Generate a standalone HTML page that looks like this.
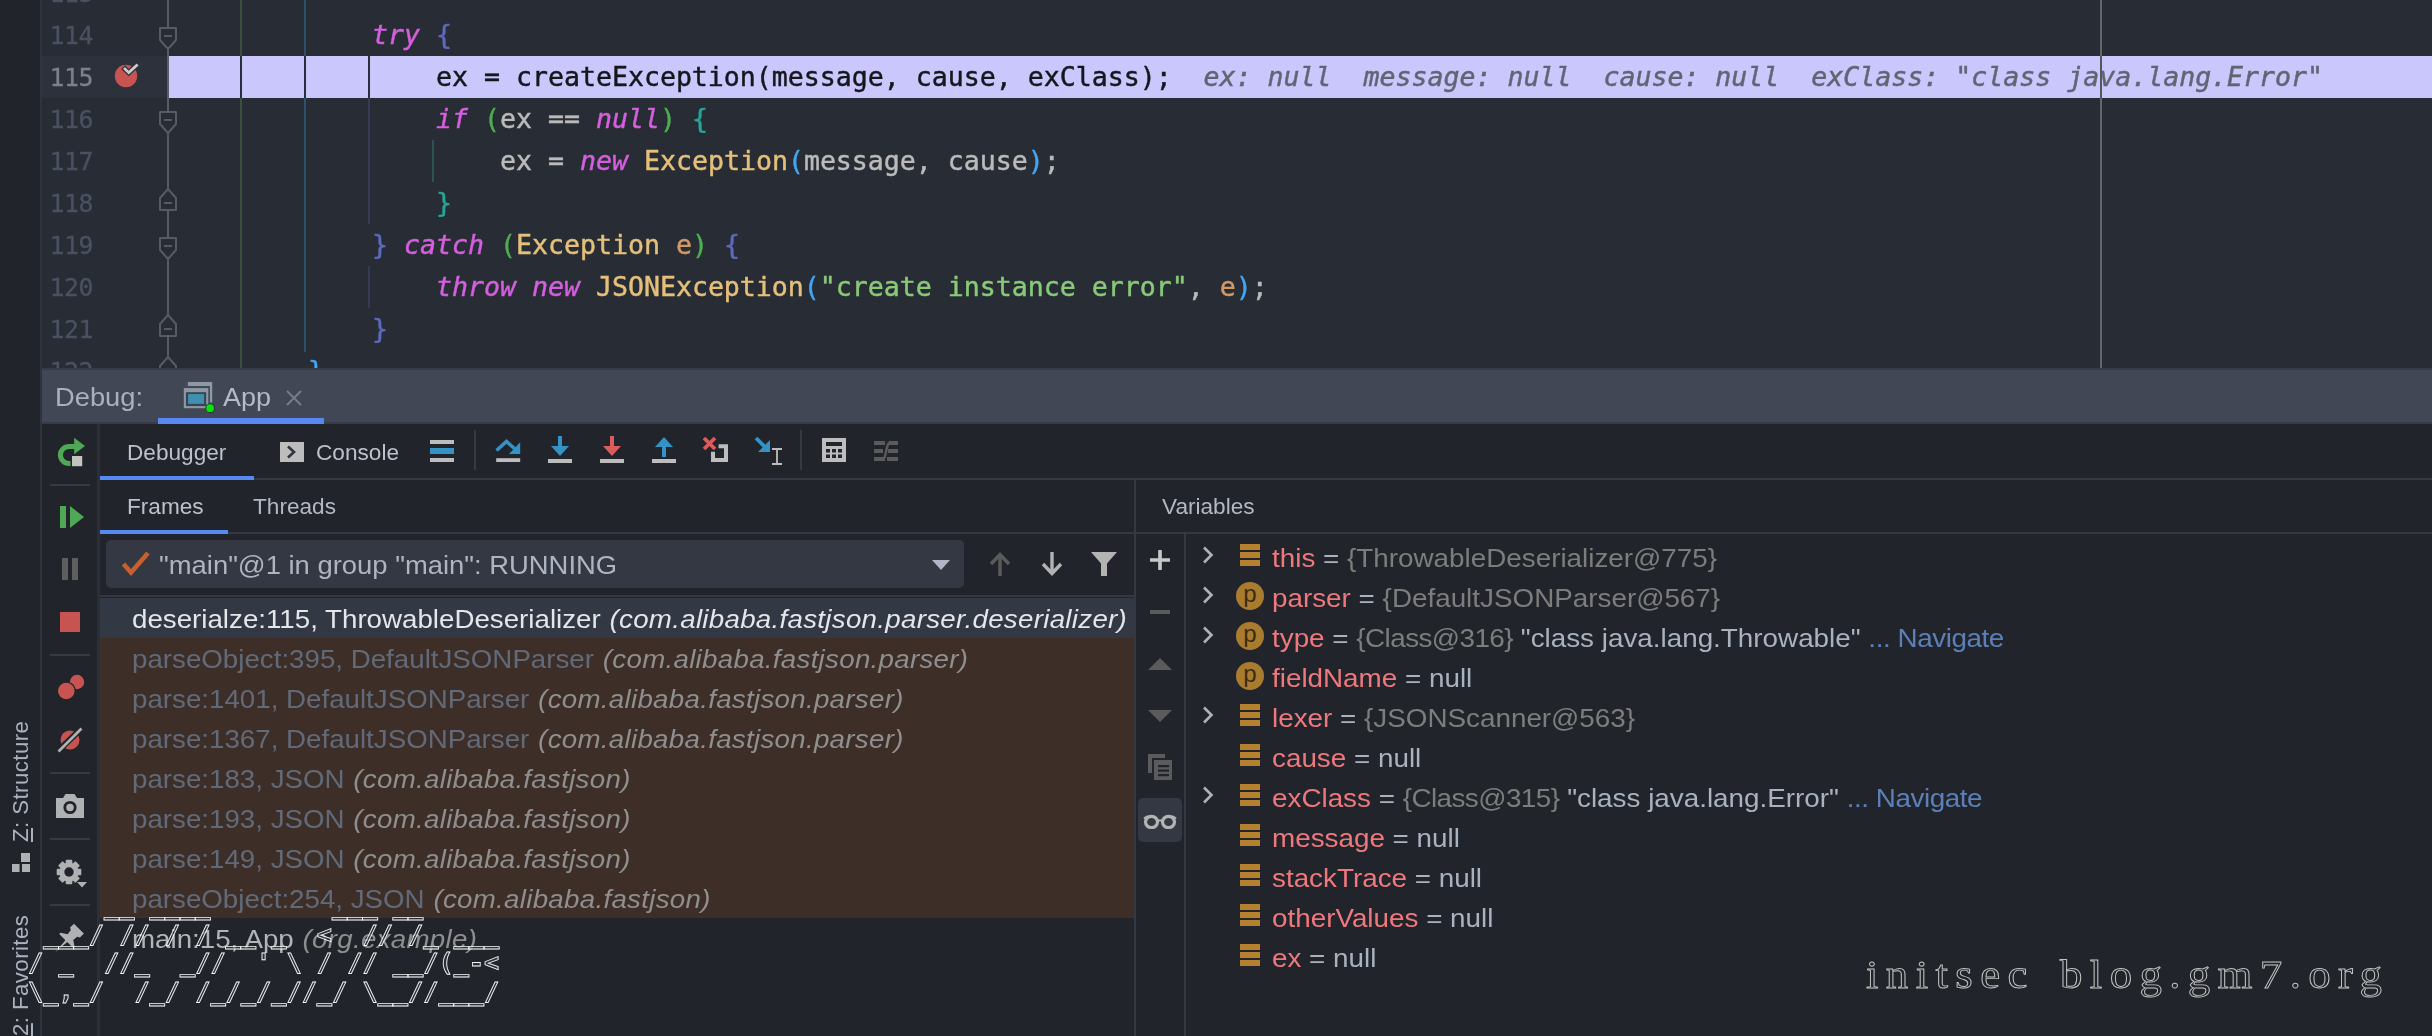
<!DOCTYPE html>
<html lang="en">
<head>
<meta charset="utf-8">
<title>Debug - ThrowableDeserializer</title>
<style>
*{box-sizing:border-box;margin:0;padding:0}
html,body{width:2432px;height:1036px;overflow:hidden;background:#21252b}
body{position:relative;font-family:"Liberation Sans",sans-serif;color:#abb2bf}
.abs{position:absolute}
/* left strip */
#strip{left:0;top:0;width:40px;height:1036px;background:#21252b}
#stripb{left:40px;top:0;width:2px;height:1036px;background:#2f343d}
.vtxt{position:absolute;left:6px;white-space:nowrap;font-size:22.2px;line-height:30px;height:30px;letter-spacing:0.45px;color:#abb2bf;transform-origin:0 0;transform:rotate(-90deg)}
/* editor */
#editor{left:42px;top:0;width:2390px;height:368px;background:#282c34;overflow:hidden}
.ln{position:absolute;left:0;width:51px;text-align:right;font-family:"DejaVu Sans Mono","Liberation Mono",monospace;font-size:24.8px;line-height:42px;height:42px;margin-top:0.5px;color:#495162;letter-spacing:-0.43px;-webkit-text-stroke:0.3px currentColor}
.code{position:absolute;left:0;white-space:pre;font-family:"DejaVu Sans Mono","Liberation Mono",monospace;font-size:26.576px;line-height:42px;height:42px;color:#bbbbbb;-webkit-text-stroke:0.45px currentColor}
.k{color:#d55fde;font-style:italic}
.c{color:#e5c07b}
.s{color:#89ca78}
.p{color:#d19a66}
.b1{color:#5c6bc0}.b2{color:#4caf50}.b3{color:#26a69a}.b4{color:#42a5f5}
.guide{position:absolute;width:2px}
/* debug header */
#dsep{left:42px;top:368px;width:2390px;height:56px;background:#363c48}
#dhead{left:42px;top:370px;width:2390px;height:52px;background:#414755}
/* debug body */
#dbody{left:42px;top:424px;width:2390px;height:612px;background:#21252b}
.ui{position:absolute;white-space:nowrap;font-size:24px;line-height:30px;color:#abb2bf;transform-origin:0 0}
.row{position:absolute;left:132px;white-space:nowrap;font-size:25.2px;line-height:40px;height:40px;color:#626a79;transform-origin:0 0;transform:scaleX(1.1)}
.row i{color:#8f8f8f;letter-spacing:0.26px;margin-left:1px}
.var{position:absolute;left:1272px;white-space:nowrap;font-size:25.2px;line-height:40px;height:40px;color:#abb2bf;transform-origin:0 0;transform:scaleX(1.1045)}
.var .n{color:#f0787d}
.var .g{color:#7d7d7d}
.var .nav{color:#5b80b9;letter-spacing:-0.4px}
.hline{position:absolute;height:2px;background:#333842}
.vline{position:absolute;width:2px;background:#333842}
#art{left:28px;top:891.5px;font-family:"DejaVu Sans Mono","Liberation Mono",monospace;font-weight:bold;font-size:25.25px;line-height:28.7px;color:rgba(52,56,68,0.6);-webkit-text-stroke:0.85px #f6f6f6;white-space:pre;letter-spacing:0}
#wm{left:1866px;top:950px;font-family:"Liberation Serif",serif;font-size:40px;line-height:50px;letter-spacing:6.6px;word-spacing:6px;color:transparent;-webkit-text-stroke:0.9px #c2c2c2;white-space:nowrap;transform-origin:0 0;transform:scaleX(1.12)}
.vtxt u{text-decoration-thickness:1.5px;text-underline-offset:3px}
.ui,.row,.var,.code,.ln,.vtxt,#art,#wm{will-change:transform}
</style>
</head>
<body>
<div id="strip" class="abs"></div>
<div id="stripb" class="abs"></div>
<div id="editor" class="abs">
<div class="abs" style="left:0;top:56px;width:126px;height:42px;background:#2c313c"></div>
<div class="abs" style="left:126px;top:56px;width:2264px;height:42px;background:#c9c7fc"></div>
<div class="guide" style="left:198px;top:0px;height:368px;background:#39503f"></div>
<div class="guide" style="left:262px;top:0px;height:352px;background:#2f506a"></div>
<div class="guide" style="left:326px;top:98px;height:126px;background:#353a55"></div>
<div class="guide" style="left:326px;top:266px;height:42px;background:#353a55"></div>
<div class="guide" style="left:390px;top:140px;height:42px;background:#2c5350"></div>
<div class="guide" style="left:198px;top:56px;height:42px;background:#2b2f3a"></div>
<div class="guide" style="left:262px;top:56px;height:42px;background:#2b2f3a"></div>
<div class="guide" style="left:326px;top:56px;height:42px;background:#2b2f3a"></div>
<div class="guide" style="left:2058px;top:0px;height:368px;background:#62666d"></div>
<div class="guide" style="left:2058px;top:56px;height:42px;background:#55555f"></div>
<div class="guide" style="left:125px;top:0;height:368px;background:#565b66"></div>
<svg class="abs" style="left:116px;top:27px" width="20" height="24" viewBox="0 0 20 24"><path d="M2 1H18V13L10 22L2 13Z" fill="#282c34" stroke="#565b66" stroke-width="2" stroke-linejoin="round"/><path d="M6 9H14" stroke="#565b66" stroke-width="2"/></svg>
<svg class="abs" style="left:116px;top:111px" width="20" height="24" viewBox="0 0 20 24"><path d="M2 1H18V13L10 22L2 13Z" fill="#282c34" stroke="#565b66" stroke-width="2" stroke-linejoin="round"/><path d="M6 9H14" stroke="#565b66" stroke-width="2"/></svg>
<svg class="abs" style="left:116px;top:237px" width="20" height="24" viewBox="0 0 20 24"><path d="M2 1H18V13L10 22L2 13Z" fill="#282c34" stroke="#565b66" stroke-width="2" stroke-linejoin="round"/><path d="M6 9H14" stroke="#565b66" stroke-width="2"/></svg>
<svg class="abs" style="left:116px;top:187px" width="20" height="24" viewBox="0 0 20 24"><path d="M2 23H18V11L10 2L2 11Z" fill="#282c34" stroke="#565b66" stroke-width="2" stroke-linejoin="round"/><path d="M6 16H14" stroke="#565b66" stroke-width="2"/></svg>
<svg class="abs" style="left:116px;top:313px" width="20" height="24" viewBox="0 0 20 24"><path d="M2 23H18V11L10 2L2 11Z" fill="#282c34" stroke="#565b66" stroke-width="2" stroke-linejoin="round"/><path d="M6 16H14" stroke="#565b66" stroke-width="2"/></svg>
<svg class="abs" style="left:116px;top:355px" width="20" height="24" viewBox="0 0 20 24"><path d="M2 23H18V11L10 2L2 11Z" fill="#282c34" stroke="#565b66" stroke-width="2" stroke-linejoin="round"/><path d="M6 16H14" stroke="#565b66" stroke-width="2"/></svg>
<div class="ln" style="top:-28px">113</div>
<div class="ln" style="top:14px">114</div>
<div class="ln" style="top:56px;color:#7a808c">115</div>
<div class="ln" style="top:98px">116</div>
<div class="ln" style="top:140px">117</div>
<div class="ln" style="top:182px">118</div>
<div class="ln" style="top:224px">119</div>
<div class="ln" style="top:266px">120</div>
<div class="ln" style="top:308px">121</div>
<div class="ln" style="top:350px">122</div>
<svg class="abs" style="left:70px;top:60px" width="30" height="32" viewBox="0 0 30 32"><circle cx="14" cy="16" r="11.2" fill="#c75450"/><path d="M11.200 7.200L16.800 12.600L26.200 3.800" fill="none" stroke="#2c313c" stroke-width="5.400"/><path d="M12 8L16.800 12.600L25.600 4.400" fill="none" stroke="#cccccc" stroke-width="2.700"/></svg>
<div class="code" style="left:330px;top:14px"><span class="k">try</span> <span class="b1">{</span></div>
<div class="code" style="left:394px;top:56px;color:#16161d">ex = createException(message, cause, exClass);<i style="color:#5f6572">  ex: null  message: null  cause: null  exClass: "class java.lang.Error"</i></div>
<div class="code" style="left:394px;top:98px"><span class="k">if</span> <span class="b2">(</span>ex == <span class="k">null</span><span class="b2">)</span> <span class="b3">{</span></div>
<div class="code" style="left:458px;top:140px">ex = <span class="k">new</span> <span class="c">Exception</span><span class="b4">(</span>message, cause<span class="b4">)</span>;</div>
<div class="code" style="left:394px;top:182px"><span class="b3">}</span></div>
<div class="code" style="left:330px;top:224px"><span class="b1">}</span> <span class="k">catch</span> <span class="b2">(</span><span class="c">Exception</span> <span class="p">e</span><span class="b2">)</span> <span class="b1">{</span></div>
<div class="code" style="left:394px;top:266px"><span class="k">throw new</span> <span class="c">JSONException</span><span class="b4">(</span><span class="s">"create instance error"</span>, <span class="p">e</span><span class="b4">)</span>;</div>
<div class="code" style="left:330px;top:308px"><span class="b1">}</span></div>
<div class="code" style="left:266px;top:350px"><span class="b4">}</span></div>
</div><!--/editor-->
<div id="dsep" class="abs"></div>
<div id="dhead" class="abs">
<div class="ui" style="left:13px;top:12px;font-size:25.2px;transform:scaleX(1.084);color:#a9b0be">Debug:</div>
<div class="abs" style="left:116px;top:48px;width:166px;height:6px;background:#568af2"></div>
<svg class="abs" style="left:140px;top:9px" width="36" height="36" viewBox="0 0 36 36"><path d="M5.900 2.900H30.200V23.500H27.900V7H5.900Z" fill="#8d9aa5"/><rect x="1.800" y="9.100" width="24.500" height="20.100" fill="#8d9aa5"/><rect x="3.900" y="13.200" width="20.300" height="13.900" fill="#3b4252"/><rect x="6.100" y="15" width="16" height="9.900" fill="#3f8fb0"/><circle cx="28.100" cy="29.200" r="4.800" fill="#2a2f3c"/><circle cx="28.100" cy="29.200" r="3.900" fill="#05e605"/></svg>
<div class="ui" style="left:181px;top:12px;font-size:25.2px;transform:scaleX(1.07);color:#b4bac6">App</div>
<svg class="abs" style="left:243px;top:19px" width="18" height="18" viewBox="0 0 18 18"><path d="M2 2L16 16M16 2L2 16" stroke="#767d8a" stroke-width="2" fill="none"/></svg>
</div><!--/dhead-->
<div id="dbody" class="abs">
<div class="abs" style="left:55px;top:0px;width:3px;height:612px;background:#2b2f37"></div>
<div class="abs" style="left:8px;top:60px;width:40px;height:2px;background:#353a44"></div>
<div class="abs" style="left:8px;top:230px;width:40px;height:2px;background:#353a44"></div>
<div class="abs" style="left:8px;top:348px;width:40px;height:2px;background:#353a44"></div>
<div class="abs" style="left:8px;top:414px;width:40px;height:2px;background:#353a44"></div>
<div class="abs" style="left:8px;top:480px;width:40px;height:2px;background:#353a44"></div>
<div class="abs" style="left:58px;top:54px;width:2332px;height:2px;background:#333843"></div>
<div class="abs" style="left:58px;top:52px;width:154px;height:4px;background:#568af2"></div>
<div class="abs" style="left:58px;top:108px;width:2332px;height:2px;background:#333843"></div>
<div class="abs" style="left:58px;top:106px;width:128px;height:4px;background:#568af2"></div>
<div class="abs" style="left:1092px;top:56px;width:2px;height:556px;background:#333843"></div>
<div class="abs" style="left:1142px;top:110px;width:2px;height:502px;background:#333843"></div>
<div class="abs" style="left:64px;top:116px;width:858px;height:48px;background:#333842;border-radius:5px"></div>
<div class="abs" style="left:58px;top:171px;width:1034px;height:2px;background:#333843"></div>
<div class="abs" style="left:58px;top:174px;width:1034px;height:40px;background:#323844"></div>
<div class="abs" style="left:58px;top:214px;width:1034px;height:280px;background:#3d2f28"></div>
<div class="abs" style="left:1096px;top:374px;width:44px;height:44px;background:#333842;border-radius:5px"></div>
<svg class="abs" style="left:12px;top:10px" width="34" height="36" viewBox="0 0 34 36"><path d="M21 12.500H14.900A8.500 8.500 0 0 0 14.900 29.500H16.500" fill="none" stroke="#4fa856" stroke-width="5"/><path d="M20.200 3.700L31 12.100L20.200 20.300Z" fill="#4fa856"/><rect x="18" y="22" width="10.200" height="10.200" fill="#c3c3c3"/></svg>
<svg class="abs" style="left:16px;top:81px" width="28" height="24" viewBox="0 0 28 24"><rect x="2" y="1" width="6" height="22" fill="#4fa856"/><path d="M12 1L26 12L12 23Z" fill="#4fa856"/></svg>
<svg class="abs" style="left:18px;top:133px" width="20" height="24" viewBox="0 0 20 24"><rect x="2" y="1" width="6" height="22" fill="#5e5e5e"/><rect x="12" y="1" width="6" height="22" fill="#5e5e5e"/></svg>
<div class="abs" style="left:18px;top:188px;width:20px;height:20px;background:#c75450"></div>
<svg class="abs" style="left:13px;top:250px" width="30" height="28" viewBox="0 0 30 28"><circle cx="22" cy="8" r="7.200" fill="#c75450"/><circle cx="11.300" cy="17" r="9.600" fill="#21252b"/><circle cx="11.300" cy="17" r="8.300" fill="#c75450"/></svg>
<svg class="abs" style="left:13px;top:301px" width="30" height="30" viewBox="0 0 30 30"><circle cx="15" cy="15" r="9.500" fill="#c75450"/><path d="M3 26L27 3" stroke="#21252b" stroke-width="6"/><path d="M3.5 26.5L26.5 3.5" stroke="#afb1b3" stroke-width="2.6"/></svg>
<svg class="abs" style="left:13px;top:369px" width="30" height="26" viewBox="0 0 30 26"><path d="M1 5H8L10.5 1H19.500L22 5H29V25H1Z" fill="#afb1b3"/><circle cx="15" cy="14.5" r="5.2" fill="none" stroke="#21252b" stroke-width="2.8"/></svg>
<svg class="abs" style="left:13.3px;top:433.8px" width="34" height="32" viewBox="0 0 34 32"><g transform="translate(14,14)"><g fill="#afb1b3"><rect x="-3.300" y="-12.300" width="6.600" height="24.600" rx="1" transform="rotate(0)"/><rect x="-3.300" y="-12.300" width="6.600" height="24.600" rx="1" transform="rotate(45)"/><rect x="-3.300" y="-12.300" width="6.600" height="24.600" rx="1" transform="rotate(90)"/><rect x="-3.300" y="-12.300" width="6.600" height="24.600" rx="1" transform="rotate(135)"/><circle r="9.600"/></g><circle r="4.700" fill="#21252b"/></g><path d="M22 24H32L27 29.500Z" fill="#afb1b3"/></svg>
<svg class="abs" style="left:4px;top:493px" width="44" height="44" viewBox="0 0 44 44"><g transform="translate(22.300,22.200) rotate(45)" fill="#afb1b3"><path d="M-10 2.800L-10 1L-4 -3L-4.500 -8L-7 -9.500V-15H7V-9.500L4.500 -8L4 -3L10 1V2.800H1.300L0 18.500L-1.300 2.800Z"/></g></svg>
<div class="ui" style="left:85px;top:14px;font-size:21.3px;transform:scaleX(1.062);color:#bcc1cc">Debugger</div>
<svg class="abs" style="left:238px;top:17.5px" width="24" height="20" viewBox="0 0 24 20"><rect width="24" height="20" fill="#bdbdbd"/><path d="M8 4.500L14 10L8 15.500" fill="none" stroke="#30343d" stroke-width="2.6"/></svg>
<div class="ui" style="left:274px;top:14px;font-size:21.3px;transform:scaleX(1.062);color:#bcc1cc">Console</div>
<svg class="abs" style="left:388px;top:15px" width="24" height="24" viewBox="0 0 24 24"><rect y="1" width="24" height="4" fill="#bdbdbd"/><rect y="9" width="24" height="6" fill="#3592c4"/><rect y="19" width="24" height="4" fill="#bdbdbd"/></svg>
<div class="abs" style="left:432px;top:6px;width:2px;height:40px;background:#353a44"></div>
<svg class="abs" style="left:451px;top:14px" width="28" height="26" viewBox="0 0 28 26"><path d="M3.500 12.500L13.500 3.500L22 11" fill="none" stroke="#3592c4" stroke-width="3.600"/><path d="M27.200 4.200V15.900H16Z" fill="#3592c4"/><rect x="3.200" y="20.200" width="24" height="3.800" fill="#bdbdbd"/></svg>
<svg class="abs" style="left:506px;top:12px" width="24" height="28" viewBox="0 0 24 28"><rect x="10" y="0" width="4" height="12" fill="#3592c4"/><path d="M3 10H21L12 20Z" fill="#3592c4"/><rect y="23" width="24" height="4" fill="#bdbdbd"/></svg>
<svg class="abs" style="left:558px;top:12px" width="24" height="28" viewBox="0 0 24 28"><rect x="10" y="0" width="4" height="12" fill="#db5c5c"/><path d="M3 10H21L12 20Z" fill="#db5c5c"/><rect y="23" width="24" height="4" fill="#bdbdbd"/></svg>
<svg class="abs" style="left:610px;top:12px" width="24" height="28" viewBox="0 0 24 28"><rect x="10" y="9" width="4" height="12" fill="#3592c4"/><path d="M3 11H21L12 1Z" fill="#3592c4"/><rect y="23" width="24" height="4" fill="#bdbdbd"/></svg>
<svg class="abs" style="left:660px;top:12px" width="28" height="28" viewBox="0 0 28 28"><path d="M2 2L13 13M13 2L2 13" stroke="#db5c5c" stroke-width="3.800"/><path d="M16.600 10.300H24V24H11V15.800" fill="none" stroke="#bdbdbd" stroke-width="4"/></svg>
<svg class="abs" style="left:712px;top:12px" width="30" height="30" viewBox="0 0 30 30"><path d="M2 2L12 12" stroke="#3592c4" stroke-width="3.800"/><path d="M16 4V16H4Z" fill="#3592c4"/><path d="M18 13H28M18 28H28M23 13V28" stroke="#bdbdbd" stroke-width="1.800" fill="none"/></svg>
<div class="abs" style="left:758px;top:6px;width:2px;height:40px;background:#353a44"></div>
<svg class="abs" style="left:780px;top:14px" width="24" height="24" viewBox="0 0 24 24"><rect width="24" height="24" fill="#bdbdbd"/><g fill="#21252b"><rect x="4" y="4" width="16" height="4"/><rect x="4" y="11" width="4" height="3.500"/><rect x="10" y="11" width="4" height="3.500"/><rect x="16" y="11" width="4" height="3.500"/><rect x="4" y="16.500" width="4" height="3.500"/><rect x="10" y="16.500" width="4" height="3.500"/><rect x="16" y="16.500" width="4" height="3.500"/></g></svg>
<svg class="abs" style="left:832px;top:15.5px" width="24" height="22" viewBox="0 0 24 22"><g fill="#5b5b5b"><rect y="1" width="11" height="4"/><rect y="9" width="9" height="4"/><rect y="17" width="11" height="4"/><rect x="15" y="1" width="9" height="4"/><rect x="14" y="9" width="10" height="4"/><rect x="13" y="17" width="11" height="4"/></g><path d="M8 20C13 20 11 2 17 2" stroke="#5b5b5b" stroke-width="2.400" fill="none"/></svg>
<div class="ui" style="left:85px;top:68px;font-size:21.3px;transform:scaleX(1.062);color:#bcc1cc">Frames</div>
<div class="ui" style="left:211px;top:68px;font-size:21.3px;transform:scaleX(1.062);color:#b2b8c4">Threads</div>
<div class="ui" style="left:1120px;top:68px;font-size:21.3px;transform:scaleX(1.062);color:#b2b8c4">Variables</div>
<svg class="abs" style="left:79px;top:126px" width="30" height="26" viewBox="0 0 30 26"><path d="M2.500 14L10 22.500L27 3" fill="none" stroke="#c75f2e" stroke-width="4.600"/></svg>
<div class="ui" style="left:117px;top:126px;font-size:25.2px;transform:scaleX(1.088);color:#aeb4c1">"main"@1 in group "main": RUNNING</div>
<svg class="abs" style="left:889px;top:134.5px" width="20" height="12" viewBox="0 0 20 12"><path d="M1 1H19L10 11Z" fill="#b0b6c8"/></svg>
<svg class="abs" style="left:946px;top:127px" width="24" height="26" viewBox="0 0 24 26"><path d="M12 4V25" stroke="#5b5b5b" stroke-width="3.400"/><path d="M3 13L12 3.500L21 13" fill="none" stroke="#5b5b5b" stroke-width="3.400"/></svg>
<svg class="abs" style="left:998px;top:127px" width="24" height="26" viewBox="0 0 24 26"><path d="M12 1V22" stroke="#b3b3b3" stroke-width="3.400"/><path d="M3 13L12 22.500L21 13" fill="none" stroke="#b3b3b3" stroke-width="3.400"/></svg>
<svg class="abs" style="left:1049px;top:128px" width="26" height="24" viewBox="0 0 26 24"><path d="M0 0H26L16 11.500V24H10V11.500Z" fill="#b3b3b3"/></svg>
<div class="row" style="left:90px;top:175px;color:#e4e6ea">deserialze:115, ThrowableDeserializer <i style="color:#e4e6ea">(com.alibaba.fastjson.parser.deserializer)</i></div>
<div class="row" style="left:90px;top:215px">parseObject:395, DefaultJSONParser <i>(com.alibaba.fastjson.parser)</i></div>
<div class="row" style="left:90px;top:255px">parse:1401, DefaultJSONParser <i>(com.alibaba.fastjson.parser)</i></div>
<div class="row" style="left:90px;top:295px">parse:1367, DefaultJSONParser <i>(com.alibaba.fastjson.parser)</i></div>
<div class="row" style="left:90px;top:335px">parse:183, JSON <i>(com.alibaba.fastjson)</i></div>
<div class="row" style="left:90px;top:375px">parse:193, JSON <i>(com.alibaba.fastjson)</i></div>
<div class="row" style="left:90px;top:415px">parse:149, JSON <i>(com.alibaba.fastjson)</i></div>
<div class="row" style="left:90px;top:455px">parseObject:254, JSON <i>(com.alibaba.fastjson)</i></div>
<div class="row" style="left:90px;top:495px;color:#b2b4b8">main:15, App <i>(org.example)</i></div>
<svg class="abs" style="left:1108px;top:126px" width="20" height="20" viewBox="0 0 20 20"><path d="M10 0V20M0 10H20" stroke="#c8c8c8" stroke-width="3.600"/></svg>
<div class="abs" style="left:1108px;top:186px;width:20px;height:4px;background:#5b5b5b"></div>
<svg class="abs" style="left:1106px;top:234px" width="24" height="12" viewBox="0 0 24 12"><path d="M0 12L12 0L24 12Z" fill="#5b5b5b"/></svg>
<svg class="abs" style="left:1106px;top:286px" width="24" height="12" viewBox="0 0 24 12"><path d="M0 0L12 12L24 0Z" fill="#5b5b5b"/></svg>
<svg class="abs" style="left:1106px;top:330px" width="24" height="26" viewBox="0 0 24 26"><path d="M0 0H17V4H4V19H0Z" fill="#5b5b5b"/><rect x="6" y="6" width="18" height="20" fill="#5b5b5b"/><g fill="#21252b"><rect x="10" y="11" width="11" height="2.200"/><rect x="10" y="15.500" width="11" height="2.200"/><rect x="10" y="20" width="11" height="2.200"/></g></svg>
<svg class="abs" style="left:1101px;top:388.5px" width="34" height="16" viewBox="0 0 34 16"><ellipse cx="8.500" cy="9" rx="6" ry="5.600" fill="none" stroke="#b3b3b3" stroke-width="3.200"/><ellipse cx="25.500" cy="9" rx="6" ry="5.600" fill="none" stroke="#b3b3b3" stroke-width="3.200"/><path d="M1 5.500C4 3 8 3 12 4.500M33 5.500C30 3 26 3 22 4.500M13 7.500H21" stroke="#b3b3b3" stroke-width="2.200" fill="none"/></svg>
<svg class="abs" style="left:1159px;top:120px" width="14" height="22" viewBox="0 0 14 22"><path d="M3 3.500L10.500 11L3 18.500" fill="none" stroke="#b0b2b6" stroke-width="2.600"/></svg>
<svg class="abs" style="left:1198px;top:120px" width="20" height="22" viewBox="0 0 20 22"><g fill="#b58130"><rect y="0" width="20" height="6"/><rect y="8" width="20" height="6"/><rect y="16" width="20" height="6"/></g></svg>
<div class="var" style="left:1230px;top:114px"><span class="n">this</span> = <span class="g">{ThrowableDeserializer@775}</span></div>
<svg class="abs" style="left:1159px;top:160px" width="14" height="22" viewBox="0 0 14 22"><path d="M3 3.500L10.500 11L3 18.500" fill="none" stroke="#b0b2b6" stroke-width="2.600"/></svg>
<div class="abs" style="left:1194px;top:158px;width:28px;height:28px;border-radius:14px;background:#a97b2e;color:#3b2c12;font-size:24px;line-height:23px;text-align:center">p</div>
<div class="var" style="left:1230px;top:154px"><span class="n">parser</span> = <span class="g">{DefaultJSONParser@567}</span></div>
<svg class="abs" style="left:1159px;top:200px" width="14" height="22" viewBox="0 0 14 22"><path d="M3 3.500L10.500 11L3 18.500" fill="none" stroke="#b0b2b6" stroke-width="2.600"/></svg>
<div class="abs" style="left:1194px;top:198px;width:28px;height:28px;border-radius:14px;background:#a97b2e;color:#3b2c12;font-size:24px;line-height:23px;text-align:center">p</div>
<div class="var" style="left:1230px;top:194px"><span class="n">type</span> = <span class="g" style="letter-spacing:-0.5px">{Class@316}</span> "class java.lang.Throwable" <span class="nav">... Navigate</span></div>
<div class="abs" style="left:1194px;top:238px;width:28px;height:28px;border-radius:14px;background:#a97b2e;color:#3b2c12;font-size:24px;line-height:23px;text-align:center">p</div>
<div class="var" style="left:1230px;top:234px"><span class="n">fieldName</span> = null</div>
<svg class="abs" style="left:1159px;top:280px" width="14" height="22" viewBox="0 0 14 22"><path d="M3 3.500L10.500 11L3 18.500" fill="none" stroke="#b0b2b6" stroke-width="2.600"/></svg>
<svg class="abs" style="left:1198px;top:280px" width="20" height="22" viewBox="0 0 20 22"><g fill="#b58130"><rect y="0" width="20" height="6"/><rect y="8" width="20" height="6"/><rect y="16" width="20" height="6"/></g></svg>
<div class="var" style="left:1230px;top:274px"><span class="n">lexer</span> = <span class="g">{JSONScanner@563}</span></div>
<svg class="abs" style="left:1198px;top:320px" width="20" height="22" viewBox="0 0 20 22"><g fill="#b58130"><rect y="0" width="20" height="6"/><rect y="8" width="20" height="6"/><rect y="16" width="20" height="6"/></g></svg>
<div class="var" style="left:1230px;top:314px"><span class="n">cause</span> = null</div>
<svg class="abs" style="left:1159px;top:360px" width="14" height="22" viewBox="0 0 14 22"><path d="M3 3.500L10.500 11L3 18.500" fill="none" stroke="#b0b2b6" stroke-width="2.600"/></svg>
<svg class="abs" style="left:1198px;top:360px" width="20" height="22" viewBox="0 0 20 22"><g fill="#b58130"><rect y="0" width="20" height="6"/><rect y="8" width="20" height="6"/><rect y="16" width="20" height="6"/></g></svg>
<div class="var" style="left:1230px;top:354px"><span class="n">exClass</span> = <span class="g" style="letter-spacing:-0.5px">{Class@315}</span> "class java.lang.Error" <span class="nav">... Navigate</span></div>
<svg class="abs" style="left:1198px;top:400px" width="20" height="22" viewBox="0 0 20 22"><g fill="#b58130"><rect y="0" width="20" height="6"/><rect y="8" width="20" height="6"/><rect y="16" width="20" height="6"/></g></svg>
<div class="var" style="left:1230px;top:394px"><span class="n">message</span> = null</div>
<svg class="abs" style="left:1198px;top:440px" width="20" height="22" viewBox="0 0 20 22"><g fill="#b58130"><rect y="0" width="20" height="6"/><rect y="8" width="20" height="6"/><rect y="16" width="20" height="6"/></g></svg>
<div class="var" style="left:1230px;top:434px"><span class="n">stackTrace</span> = null</div>
<svg class="abs" style="left:1198px;top:480px" width="20" height="22" viewBox="0 0 20 22"><g fill="#b58130"><rect y="0" width="20" height="6"/><rect y="8" width="20" height="6"/><rect y="16" width="20" height="6"/></g></svg>
<div class="var" style="left:1230px;top:474px"><span class="n">otherValues</span> = null</div>
<svg class="abs" style="left:1198px;top:520px" width="20" height="22" viewBox="0 0 20 22"><g fill="#b58130"><rect y="0" width="20" height="6"/><rect y="8" width="20" height="6"/><rect y="16" width="20" height="6"/></g></svg>
<div class="var" style="left:1230px;top:514px"><span class="n">ex</span> = null</div>
</div><!--/dbody-->
<!--extra-->
<pre id="art" class="abs">     __ ____        ___ __
 ___/ // / / __ _  &lt;  // /_ ___
/ _  //_  _//  ' \ / // __/(_-&lt;
\_,_/  /_/ /_/_/_//_/ \__//___/</pre>
<div id="wm" class="abs">initsec blog.gm7.org</div>
<div class="vtxt" style="top:842px"><u>Z</u>: Structure</div>
<div class="vtxt" style="top:1036px"><u>2</u>: Favorites</div>
<svg class="abs" style="left:12px;top:853px" width="19" height="20" viewBox="0 0 19 20"><g fill="#afb1b3"><rect x="9" y="0" width="9" height="9"/><rect x="0" y="11" width="7.500" height="8"/><rect x="10" y="11" width="8" height="8"/></g></svg>
<!--/extra-->
</body>
</html>
